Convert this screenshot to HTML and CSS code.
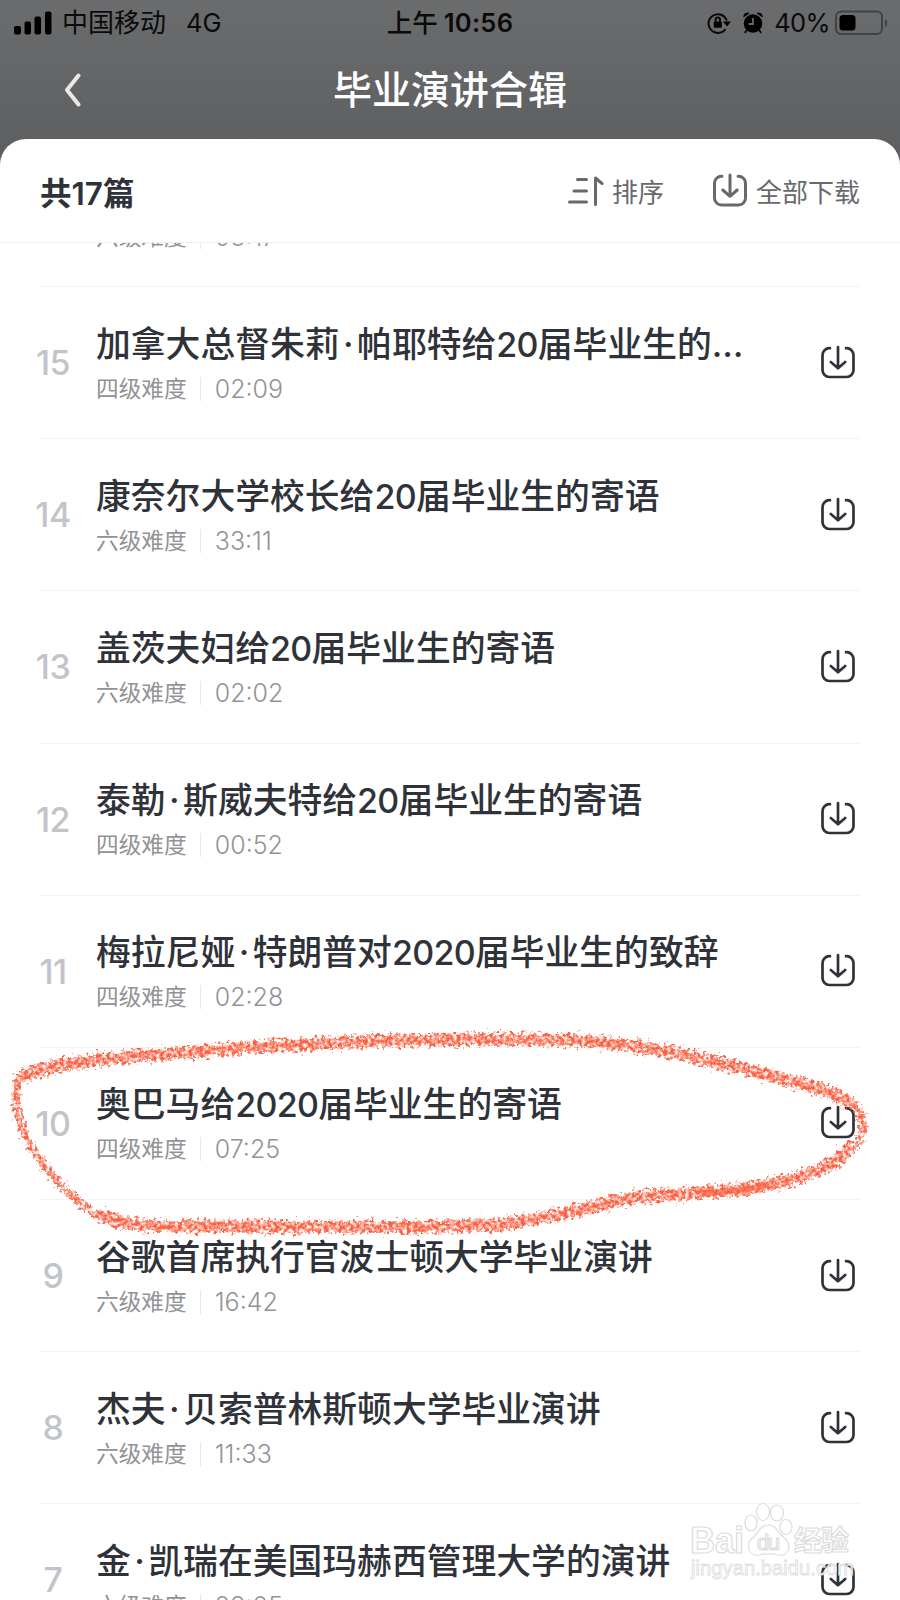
FILE: index.html
```html
<!DOCTYPE html>
<html lang="zh-CN">
<head>
    <meta charset="UTF-8">
    <meta name="viewport" content="width=device-width, initial-scale=1.0">
    <title>毕业演讲合辑</title>
    <link rel="stylesheet" href="styles.css">
</head>
<body>
    <!-- 图标 -->
    <svg class="defs" width="0" height="0">
        <symbol id="icon-download" viewBox="0 0 36 36">
            <path d="M10 3.200H9.500a7 7 0 0 0-7 7V25a7 7 0 0 0 7 7h17a7 7 0 0 0 7-7V10.200a7 7 0 0 0-7-7H26M18 2v21M10.800 17l7.200 6.300 7.200-6.300"/>
        </symbol>
    </svg>

    <div class="status-bar">
        <div class="status-left">
            <svg class="signal" width="38" height="24" viewBox="0 0 38 24">
                <rect x="0" y="15" width="7" height="8.500" rx="2"/>
                <rect x="10.500" y="10.500" width="6.500" height="13" rx="2"/>
                <rect x="20.500" y="5.500" width="6.500" height="18" rx="2"/>
                <rect x="31" y="0.500" width="6.500" height="23" rx="2"/>
            </svg>
            <span class="carrier">中国移动</span>
            <span class="network">4G</span>
        </div>
        <div class="status-time"><span>上午</span><b>10:56</b></div>
        <div class="status-right">
            <svg class="lock" width="24" height="22" viewBox="0 0 24 22">
                <path class="ring" d="M18.500 17.200A9.400 9.400 0 1 1 19.800 8.500"/>
                <path d="M15.800 9.500h8l-3.600 5z"/>
                <rect x="6.800" y="9.500" width="8" height="6.200" rx="1"/>
                <path class="shackle" d="M8.600 10V7.800a2.200 2.200 0 0 1 4.400 0V10"/>
            </svg>
            <svg class="alarm" width="20" height="22" viewBox="0 0 20 22">
                <circle cx="10" cy="11.500" r="9.300"/>
                <path d="M0.500 5.500A4 4 0 0 1 6.500 1.200zM19.500 5.500A4 4 0 0 0 13.500 1.200z"/>
                <path class="legs" d="M4 18l-2.200 2.800M16 18l2.200 2.800"/>
                <path class="hands" d="M10 6v6H5.500"/>
            </svg>
            <span class="percent">40%</span>
            <svg class="battery" width="54" height="26" viewBox="0 0 54 26">
                <rect class="shell" x="1" y="1.500" width="46" height="22.500" rx="5"/>
                <rect x="4.500" y="5" width="16" height="15.500" rx="3.500"/>
                <path class="tip" d="M50 9c3 1 3 7 0 8z"/>
            </svg>
        </div>
    </div>

    <div class="nav">
        <svg class="back" width="18" height="34" viewBox="0 0 18 34"><path d="M14.500 2.500L3 17l11.500 14.500"/></svg>
        <h1>毕业演讲合辑</h1>
    </div>

    <div class="panel">
        <div class="toolbar">
            <div class="count">共17篇</div>
            <div class="tool sort">
                <svg width="36" height="30" viewBox="0 0 36 30"><path d="M9.500 3.500h9M6 15h12.500M1.500 26h17M27.500 28.500V2l6.500 5.500"/></svg>
                <span>排序</span>
            </div>
            <div class="tool">
                <svg class="dl" width="36" height="36"><use href="#icon-download"/></svg>
                <span>全部下载</span>
            </div>
        </div>

        <div class="list-wrap">
            <div class="list">
                <div class="row">
                    <div class="num"></div>
                    <div class="info">
                        <div class="title"></div>
                        <div class="meta"><span>六级难度</span><i></i><span class="time">03:17</span></div>
                    </div>
                </div>
                <div class="row">
                    <div class="num">15</div>
                    <div class="info">
                        <div class="title">加拿大总督朱莉<em>·</em>帕耶特给<s>20</s>届毕业生的<u>…</u></div>
                        <div class="meta"><span>四级难度</span><i></i><span class="time">02:09</span></div>
                    </div>
                    <svg class="dl" width="36" height="36"><use href="#icon-download"/></svg>
                </div>
                <div class="row">
                    <div class="num">14</div>
                    <div class="info">
                        <div class="title">康奈尔大学校长给<s>20</s>届毕业生的寄语</div>
                        <div class="meta"><span>六级难度</span><i></i><span class="time">33:11</span></div>
                    </div>
                    <svg class="dl" width="36" height="36"><use href="#icon-download"/></svg>
                </div>
                <div class="row">
                    <div class="num">13</div>
                    <div class="info">
                        <div class="title">盖茨夫妇给<s>20</s>届毕业生的寄语</div>
                        <div class="meta"><span>六级难度</span><i></i><span class="time">02:02</span></div>
                    </div>
                    <svg class="dl" width="36" height="36"><use href="#icon-download"/></svg>
                </div>
                <div class="row">
                    <div class="num">12</div>
                    <div class="info">
                        <div class="title">泰勒<em>·</em>斯威夫特给<s>20</s>届毕业生的寄语</div>
                        <div class="meta"><span>四级难度</span><i></i><span class="time">00:52</span></div>
                    </div>
                    <svg class="dl" width="36" height="36"><use href="#icon-download"/></svg>
                </div>
                <div class="row">
                    <div class="num">11</div>
                    <div class="info">
                        <div class="title">梅拉尼娅<em>·</em>特朗普对<s>2020</s>届毕业生的致辞</div>
                        <div class="meta"><span>四级难度</span><i></i><span class="time">02:28</span></div>
                    </div>
                    <svg class="dl" width="36" height="36"><use href="#icon-download"/></svg>
                </div>
                <div class="row">
                    <div class="num">10</div>
                    <div class="info">
                        <div class="title">奥巴马给<s>2020</s>届毕业生的寄语</div>
                        <div class="meta"><span>四级难度</span><i></i><span class="time">07:25</span></div>
                    </div>
                    <svg class="dl" width="36" height="36"><use href="#icon-download"/></svg>
                </div>
                <div class="row">
                    <div class="num">9</div>
                    <div class="info">
                        <div class="title">谷歌首席执行官波士顿大学毕业演讲</div>
                        <div class="meta"><span>六级难度</span><i></i><span class="time">16:42</span></div>
                    </div>
                    <svg class="dl" width="36" height="36"><use href="#icon-download"/></svg>
                </div>
                <div class="row">
                    <div class="num">8</div>
                    <div class="info">
                        <div class="title">杰夫<em>·</em>贝索普林斯顿大学毕业演讲</div>
                        <div class="meta"><span>六级难度</span><i></i><span class="time">11:33</span></div>
                    </div>
                    <svg class="dl" width="36" height="36"><use href="#icon-download"/></svg>
                </div>
                <div class="row">
                    <div class="num">7</div>
                    <div class="info">
                        <div class="title">金<em>·</em>凯瑞在美国玛赫西管理大学的演讲</div>
                        <div class="meta"><span>六级难度</span><i></i><span class="time">28:05</span></div>
                    </div>
                    <svg class="dl" width="36" height="36"><use href="#icon-download"/></svg>
                </div>
            </div>
        </div>
    </div>

    <!-- 手绘圈注 -->
    <svg class="doodle" width="900" height="260" viewBox="0 1010 900 260">
        <filter id="crayon" x="-5%" y="-10%" width="110%" height="120%" color-interpolation-filters="sRGB">
            <feTurbulence type="fractalNoise" baseFrequency="0.28" numOctaves="3" seed="4" result="noise"/>
            <feDisplacementMap in="SourceGraphic" in2="noise" scale="15" xChannelSelector="R" yChannelSelector="G" result="rough"/>
            <feColorMatrix in="noise" type="matrix" values="0 0 0 0 0  0 0 0 0 0  0 0 0 0 0  0 0 2.200 0 -0.420" result="grain"/>
            <feComposite in="rough" in2="grain" operator="in"/>
        </filter>
        <g filter="url(#crayon)">
            <path class="thick" d="M20 1076C50 1064 80 1060 120 1057C200 1050 280 1044 350 1041C430 1038 510 1038 570 1039C640 1043 690 1054 740 1067C790 1080 830 1088 849 1101"/>
            <path class="thin" d="M845 1098C868 1112 869 1135 850 1148M19 1077C12 1100 18 1124 33 1148C56 1184 80 1207 108 1219"/>
            <path class="thick" d="M850 1147C830 1172 780 1183 742 1188C700 1193 660 1193 625 1198C590 1206 550 1217 505 1223C430 1228 390 1225 330 1226L150 1225C130 1224 115 1221 102 1215"/>
            <path class="thin" d="M700 1193C730 1191 750 1188 768 1184"/>
        </g>
        <path class="press" d="M704 1192C730 1191 750 1188 766 1184"/>
    </svg>

    <!-- 水印 -->
    <svg class="watermark" width="172" height="84" viewBox="686 1500 172 84">
        <text class="wm-big" x="690" y="1553" textLength="54" lengthAdjust="spacingAndGlyphs">Bai</text>
        <path d="M768.500 1525c-9 0-10 8-15 12c-9 7-5 20 6 18c6-1.500 12-1.500 18 0c12 2 15-11 6-18c-6-4-7-12-15-12z"/>
        <ellipse cx="751" cy="1523" rx="6" ry="8"/>
        <ellipse cx="763" cy="1512" rx="6.500" ry="8.500"/>
        <ellipse cx="777" cy="1513" rx="6.500" ry="8"/>
        <ellipse cx="786" cy="1527" rx="6" ry="7.500"/>
        <text class="wm-du" x="757" y="1550" textLength="23">du</text>
        <text class="wm-cn" x="794" y="1551" textLength="55">经验</text>
        <text class="wm-url" x="691" y="1575" textLength="163">jingyan.baidu.com</text>
    </svg>
</body>
</html>
```
FILE: styles.css
```css
* {
    margin: 0;
    padding: 0;
    box-sizing: border-box;
}

body {
    width: 900px;
    height: 1600px;
    overflow: hidden;
    position: relative;
    font-family: Inter, "Noto Sans CJK SC", sans-serif;
    background: linear-gradient(#6b6c6e 0, #5d5e60 160px);
    color: #2f3339;
}

svg {
    display: block;
    flex: none;
}

.defs {
    position: absolute;
}

/* 状态栏 */
.status-bar {
    height: 46px;
    padding: 0 11px 0 14px;
    display: grid;
    grid-template-columns: 1fr auto 1fr;
    align-items: center;
    color: #0a0a0a;
    font-size: 25.500px;
    line-height: 46px;
}

.status-left,
.status-time,
.status-right {
    display: flex;
    align-items: center;
}

.carrier {
    margin-left: 10px;
    font-size: 26px;
}

.network {
    margin-left: 20px;
}

.status-time {
    gap: 6px;
    font-weight: 500;
    margin-left: -3px;
}

.status-time b {
    font-weight: 600;
    letter-spacing: 0.300px;
}

.status-right {
    justify-content: flex-end;
}

.lock .ring,
.lock .shackle {
    fill: none;
    stroke: #0a0a0a;
    stroke-width: 2;
}

.alarm {
    margin: 0 11px 0 12px;
}

.alarm .legs {
    stroke: #0a0a0a;
    stroke-width: 2;
}

.alarm .hands {
    fill: none;
    stroke: #66676a;
    stroke-width: 1.800;
}

.percent {
    letter-spacing: -0.600px;
}

.battery {
    margin-left: 5px;
}

.battery .shell {
    fill: none;
    stroke: #414244;
    stroke-width: 2;
}

.battery .tip {
    fill: #414244;
}

/* 标题栏 */
.nav {
    height: 93px;
    padding-top: 1px;
    display: grid;
    grid-template-columns: 160px 1fr 160px;
}

.back {
    margin: 26px 0 0 64px;
}

.back path {
    fill: none;
    stroke: #e9e9ea;
    stroke-width: 4;
    stroke-linecap: round;
    stroke-linejoin: round;
}

h1 {
    color: #fff;
    font-size: 39px;
    font-weight: 500;
    line-height: 85px;
    text-align: center;
}

/* 列表面板 */
.panel {
    height: 1461px;
    background: #fff;
    border-radius: 26px 26px 0 0;
    overflow: hidden;
}

.toolbar {
    height: 104px;
    padding: 0 40px;
    display: flex;
    align-items: center;
    border-bottom: 1px solid #f0f0f1;
}

.count {
    flex: 1;
    font-size: 31.500px;
    font-weight: 600;
}

.tool {
    display: flex;
    align-items: center;
    gap: 8px;
    color: #68696c;
    font-size: 26px;
}

.tool svg {
    stroke: #68696c;
    stroke-width: 3;
    stroke-linecap: round;
    stroke-linejoin: round;
    fill: none;
}

.sort {
    margin-right: 48px;
}

.list-wrap {
    height: 1357px;
    overflow: hidden;
    display: flex;
    flex-direction: column;
}

.list {
    margin-top: -108px;
    padding: 0 40px;
}

.row {
    height: 152.150px;
    display: flex;
    align-items: center;
    border-bottom: 1.500px solid #f4f4f5;
}

.num {
    width: 28px;
    margin: 0 29px 0 -1px;
    display: flex;
    justify-content: center;
    color: #c3c4ca;
    font-size: 34px;
    font-weight: 500;
    letter-spacing: -0.500px;
}

.info {
    flex: 1;
}

.title {
    height: 48px;
    font-size: 34.800px;
    font-weight: 500;
    line-height: 49px;
    white-space: nowrap;
}

.title em,
.title s,
.title u {
    font-style: normal;
    text-decoration: none;
}

.title em {
    display: inline-block;
    width: 17.500px;
    text-align: center;
}

.title s {
    font-size: 34px;
    font-weight: 450;
    letter-spacing: -0.700px;
}

.meta {
    margin-top: 4px;
    display: flex;
    align-items: center;
    color: #929396;
    font-size: 22.700px;
    line-height: 34px;
}

.meta i {
    width: 1px;
    height: 24px;
    margin: 0 14px 0 13px;
    background: #e8e8ea;
}

.time {
    font-size: 25px;
    font-weight: 300;
}

.dl {
    fill: none;
    stroke-linecap: round;
    stroke-linejoin: round;
}

.row .dl {
    margin-right: 4px;
    stroke: #2f3339;
    stroke-width: 2.700;
}

/* 圈注和水印浮在列表上方 */
.doodle {
    position: absolute;
    top: 1011px;
    left: 0;
}

.doodle path {
    fill: none;
    stroke: #fb5f40;
    stroke-linecap: round;
}

.doodle .thick {
    stroke-width: 12px;
}

.doodle .thin {
    stroke-width: 7px;
}

.doodle .press {
    stroke-width: 6px;
    stroke-opacity: 0.600;
}

.watermark {
    position: absolute;
    top: 1500px;
    left: 686px;
    fill: #fff;
    fill-opacity: 0.800;
    stroke: #dcdcdc;
    stroke-width: 1.200;
}

.watermark text {
    font-family: "Liberation Sans", "Noto Sans CJK SC", sans-serif;
    font-weight: bold;
}

.wm-big {
    font-size: 36px;
}

.watermark .wm-du {
    font-size: 22px;
    font-weight: normal;
}

.wm-cn {
    font-size: 28px;
}

.wm-url {
    font-size: 20px;
    stroke-width: 0.800;
}

.watermark .wm-url {
    font-weight: normal;
}
```
